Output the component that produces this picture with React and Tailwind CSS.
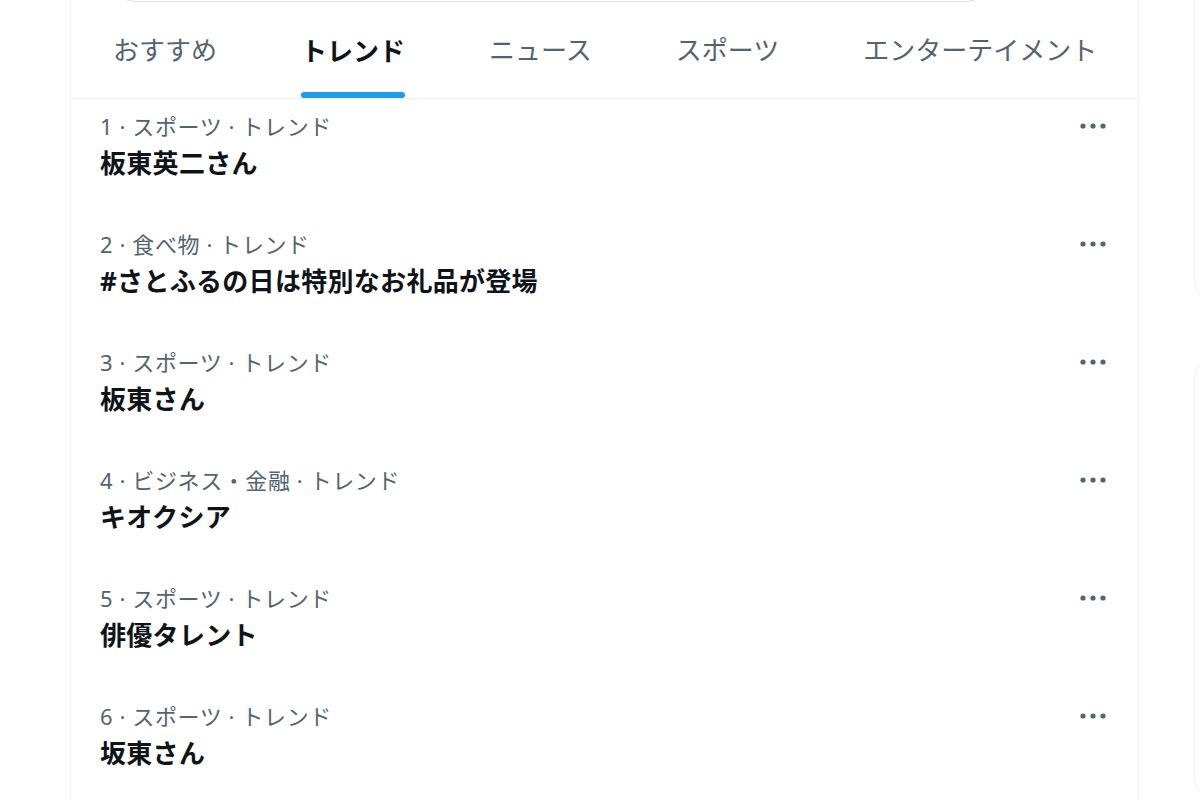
const tabs = ["おすすめ", "トレンド", "ニュース", "スポーツ", "エンターテイメント"];

const trends = [
  { rank: 1, category: "スポーツ", name: "板東英二さん" },
  { rank: 2, category: "食べ物", name: "#さとふるの日は特別なお礼品が登場" },
  { rank: 3, category: "スポーツ", name: "板東さん" },
  { rank: 4, category: "ビジネス・金融", name: "キオクシア" },
  { rank: 5, category: "スポーツ", name: "俳優タレント" },
  { rank: 6, category: "スポーツ", name: "坂東さん" },
];

function MoreIcon() {
  return (
    <svg width="26" height="8" viewBox="0 0 26 8" className="text-[#536471]">
      <circle cx="3" cy="4" r="2.6" fill="currentColor" />
      <circle cx="13" cy="4" r="2.6" fill="currentColor" />
      <circle cx="23" cy="4" r="2.6" fill="currentColor" />
    </svg>
  );
}

function TrendRow({ trend }) {
  return (
    <div className="flex h-[118px] items-start justify-between pl-[29px] pr-[32px] pt-[13px]">
      <div className="flex flex-col gap-[5px]">
        <div className="flex h-[28px] items-center whitespace-pre text-[22px] tracking-[0.6px] text-[#536471]">
          {trend.rank} · {trend.category} · トレンド
        </div>
        <div className="flex h-[36px] items-center whitespace-nowrap text-[26px] font-bold tracking-[0.3px] text-[#0f1419]">
          {trend.name}
        </div>
      </div>
      <div className="flex h-[28px] items-center">
        <MoreIcon />
      </div>
    </div>
  );
}

export default function App() {
  return (
    <div
      className="flex h-[800px] w-[1200px] overflow-hidden bg-white"
      style={{ fontFamily: '"Noto Sans", "Noto Sans CJK JP", sans-serif' }}
    >
      <div className="w-[70px] shrink-0" />

      {/* main timeline column */}
      <main className="flex w-[1069px] shrink-0 flex-col border-x border-[#eff3f4]">
        <div className="px-[40px]">
          <div className="-mt-[48px] h-[50px] w-[880px] rounded-full border border-[#d6dee3] bg-white" />
        </div>

        <nav className="flex h-[97px] border-b border-[#eff3f4]">
          {tabs.map((tab, i) => {
            const active = i === 1;
            return (
              <div key={tab} className="flex shrink-0 flex-col items-center px-[42px]">
                <div
                  className={
                    active
                      ? "flex h-[98px] items-center justify-center whitespace-nowrap text-[26px] font-bold text-[#0f1419]"
                      : "flex h-[98px] items-center justify-center whitespace-nowrap text-[26px] font-normal text-[#536471]"
                  }
                >
                  <span className="mt-[1px]">{tab}</span>
                </div>
                {active && (
                  <div className="-mt-[8px] h-[6px] w-full rounded-full bg-[#1d9bf0]" />
                )}
              </div>
            );
          })}
        </nav>

        <div className="flex flex-col">
          {trends.map((t) => (
            <TrendRow key={t.rank} trend={t} />
          ))}
        </div>
      </main>

      {/* right sidebar cards */}
      <aside className="ml-[55px] flex w-[350px] shrink-0 flex-col">
        <div className="-mt-[20px] h-[365px] rounded-[24px] border border-[#eff3f4]" />
        <div className="mt-[50px] h-[500px] rounded-[24px] border border-[#eff3f4]" />
      </aside>
    </div>
  );
}
